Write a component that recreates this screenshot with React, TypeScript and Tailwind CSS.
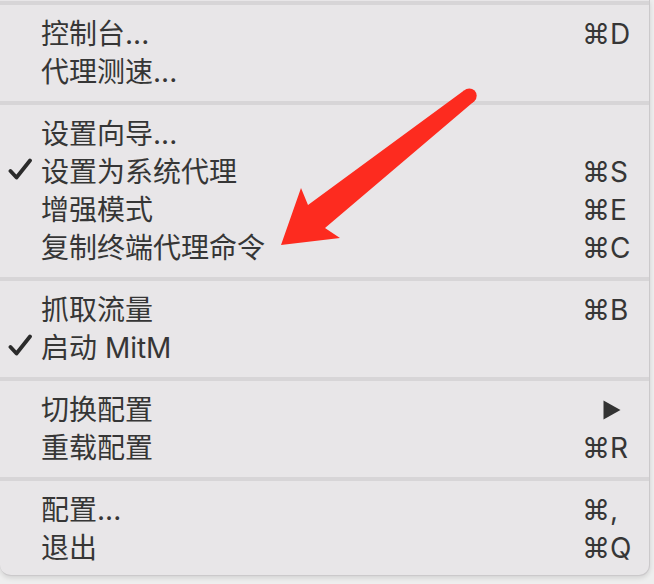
import React from "react";

const FONT = {
  fontFamily: "Inter, 'Noto Sans CJK SC', 'DejaVu Sans', sans-serif",
};

function Check() {
  return (
    <svg width="26" height="24" viewBox="0 0 26 24" className="block">
      <path
        d="M2.5 13 L8.5 19.5 L22 2.5"
        fill="none"
        stroke="#2b2b2b"
        strokeWidth="3.8"
        strokeLinecap="round"
        strokeLinejoin="round"
      />
    </svg>
  );
}

function SubArrow() {
  return (
    <svg width="18" height="20" viewBox="0 0 18 20" className="block">
      <path d="M0.5 0.5 L17.5 10 L0.5 19.5 Z" fill="#333333" />
    </svg>
  );
}

type Item = {
  label: string;
  shortcut?: string;
  checked?: boolean;
  submenu?: boolean;
};

function Row({ item }: { item: Item }) {
  return (
    <div className="h-[38px] flex items-center text-[28px] leading-[38px] text-[#363636] font-normal">
      <div className="w-[41px] h-full flex items-center pl-[8px] -mt-[4px]">
        {item.checked ? <Check /> : null}
      </div>
      <div className="flex-1 whitespace-nowrap">{item.label}</div>
      <div className="w-[67px] h-full flex items-center whitespace-nowrap">
        {item.submenu ? (
          <div className="pl-[21px]">
            <SubArrow />
          </div>
        ) : (
          item.shortcut
        )}
      </div>
    </div>
  );
}

function Sep({ top }: { top?: boolean }) {
  return (
    <div className={top ? "pt-[1px] pb-[10px]" : "py-[10px]"}>
      <div className="h-[4px] bg-[#d7d5d7]" />
    </div>
  );
}

const groups: Item[][] = [
  [{ label: "控制台...", shortcut: "⌘D" }, { label: "代理测速..." }],
  [
    { label: "设置向导..." },
    { label: "设置为系统代理", shortcut: "⌘S", checked: true },
    { label: "增强模式", shortcut: "⌘E" },
    { label: "复制终端代理命令", shortcut: "⌘C" },
  ],
  [
    { label: "抓取流量", shortcut: "⌘B" },
    { label: "启动 MitM", checked: true },
  ],
  [{ label: "切换配置", submenu: true }, { label: "重载配置", shortcut: "⌘R" }],
  [{ label: "配置...", shortcut: "⌘," }, { label: "退出", shortcut: "⌘Q" }],
];

export default function App() {
  return (
    <div
      className="relative w-[654px] h-[584px] bg-[#eeeeee] overflow-hidden"
      style={FONT}
    >
      <div className="w-[650px] h-[576px] bg-[#e8e6e8] rounded-br-[11px] rounded-bl-[11px] border-r border-b border-[#cbc9cb] shadow-[0_2px_5px_rgba(0,0,0,0.12)] flex flex-col">
        {groups.map((g, gi) => (
          <div key={gi}>
            <Sep top={gi === 0} />
            {g.map((it, i) => (
              <Row key={i} item={it} />
            ))}
          </div>
        ))}
      </div>
      <svg
        className="absolute left-0 top-0 pointer-events-none"
        width="654"
        height="584"
        viewBox="0 0 654 584"
      >
        <path
          d="M464 90.5 L308 205 L301 188 L281 245 L340 238 L325 228 L474.5 101 Z"
          fill="#fd2b1f"
        />
        <circle cx="469.3" cy="95.8" r="7.4" fill="#fd2b1f" />
      </svg>
    </div>
  );
}
